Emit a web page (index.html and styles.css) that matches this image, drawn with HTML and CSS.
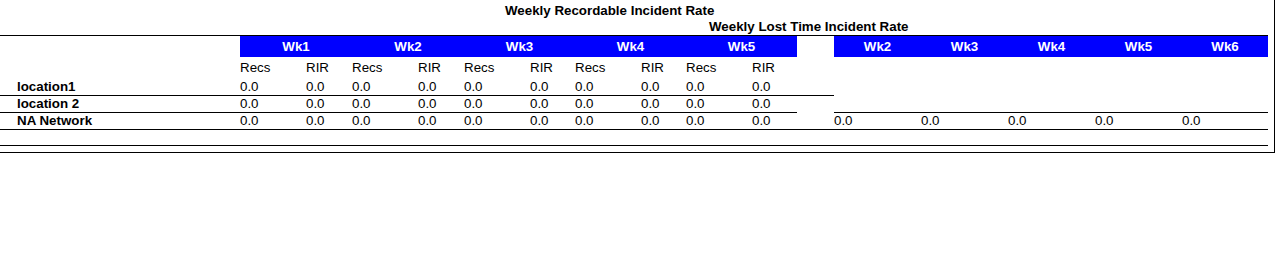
FILE: index.html
```html
<!DOCTYPE html>
<html>
<head>
<meta charset="utf-8">
<title>Weekly Incident Rates</title>
<link rel="stylesheet" href="styles.css">
</head>
<body>
<div class="report">
  <div class="titles">
    <div class="title t1">Weekly Recordable Incident Rate</div>
    <div class="title t2">Weekly Lost Time Incident Rate</div>
  </div>
  <div class="grid">
    <!-- header -->
    <div class="hd"></div>
    <div class="wk span2">Wk1</div>
    <div class="wk span2">Wk2</div>
    <div class="wk span2">Wk3</div>
    <div class="wk span2">Wk4</div>
    <div class="wk span2">Wk5</div>
    <div class="hd"></div>
    <div class="wk">Wk2</div>
    <div class="wk">Wk3</div>
    <div class="wk">Wk4</div>
    <div class="wk">Wk5</div>
    <div class="wk">Wk6</div>

    <!-- sub header -->
    <div class="sub"></div>
    <div class="sub">Recs</div><div class="sub">RIR</div>
    <div class="sub">Recs</div><div class="sub">RIR</div>
    <div class="sub">Recs</div><div class="sub">RIR</div>
    <div class="sub">Recs</div><div class="sub">RIR</div>
    <div class="sub">Recs</div><div class="sub">RIR</div>
    <div class="sub"></div>
    <div class="sub"></div><div class="sub"></div><div class="sub"></div><div class="sub"></div><div class="sub"></div>

    <!-- location1 -->
    <div class="cell label b">location1</div>
    <div class="cell b">0.0</div><div class="cell b">0.0</div>
    <div class="cell b">0.0</div><div class="cell b">0.0</div>
    <div class="cell b">0.0</div><div class="cell b">0.0</div>
    <div class="cell b">0.0</div><div class="cell b">0.0</div>
    <div class="cell b">0.0</div><div class="cell b">0.0</div>
    <div class="cell b"></div>
    <div class="cell"></div><div class="cell"></div><div class="cell"></div><div class="cell"></div><div class="cell"></div>

    <!-- location 2 -->
    <div class="cell label b">location 2</div>
    <div class="cell b">0.0</div><div class="cell b">0.0</div>
    <div class="cell b">0.0</div><div class="cell b">0.0</div>
    <div class="cell b">0.0</div><div class="cell b">0.0</div>
    <div class="cell b">0.0</div><div class="cell b">0.0</div>
    <div class="cell b">0.0</div><div class="cell b">0.0</div>
    <div class="cell"></div>
    <div class="cell b"></div><div class="cell b"></div><div class="cell b"></div><div class="cell b"></div><div class="cell b"></div>

    <!-- NA Network -->
    <div class="cell label b">NA Network</div>
    <div class="cell b">0.0</div><div class="cell b">0.0</div>
    <div class="cell b">0.0</div><div class="cell b">0.0</div>
    <div class="cell b">0.0</div><div class="cell b">0.0</div>
    <div class="cell b">0.0</div><div class="cell b">0.0</div>
    <div class="cell b">0.0</div><div class="cell b">0.0</div>
    <div class="cell b"></div>
    <div class="cell b">0.0</div><div class="cell b">0.0</div><div class="cell b">0.0</div><div class="cell b">0.0</div><div class="cell b">0.0</div>

    <!-- empty row -->
    <div class="empty"></div>
  </div>
</div>
</body>
</html>
```
FILE: styles.css
```css
html, body {
  margin: 0;
  padding: 0;
  background: #ffffff;
}

body {
  font-family: "Liberation Sans", Arial, sans-serif;
  font-size: 13.33px;
  color: #000000;
}

.report {
  width: 1274px;
  height: 152px;
  border-right: 1px solid #000000;
  border-bottom: 1px solid #000000;
}

.titles {
  padding-top: 3px;
}

.title {
  font-weight: bold;
  line-height: 16px;
  white-space: nowrap;
}

.t1 {
  padding-left: 505px;
}

.t2 {
  padding-left: 709px;
}

.grid {
  width: 1268px;
  border-top: 1px solid #000000;
  display: grid;
  grid-template-columns: 240px 66px 46px 66px 46px 66px 45px 66px 45px 66px 45px 37px 87px 87px 87px 87px 86px;
  grid-template-rows: 21px 22px 17px 17px 17px 16px;
}

.hd {
  height: 21px;
}

.wk {
  background: #0000ff;
  color: #ffffff;
  font-weight: bold;
  line-height: 21px;
  text-align: center;
}

.span2 {
  grid-column: span 2;
}

.sub {
  padding-top: 3px;
  line-height: 16px;
}

.cell {
  line-height: 16px;
  white-space: nowrap;
}

.label {
  font-weight: bold;
  padding-left: 17px;
}

.b {
  border-bottom: 1px solid #000000;
}

.empty {
  grid-column: 1 / -1;
  border-bottom: 1px solid #000000;
}
```
